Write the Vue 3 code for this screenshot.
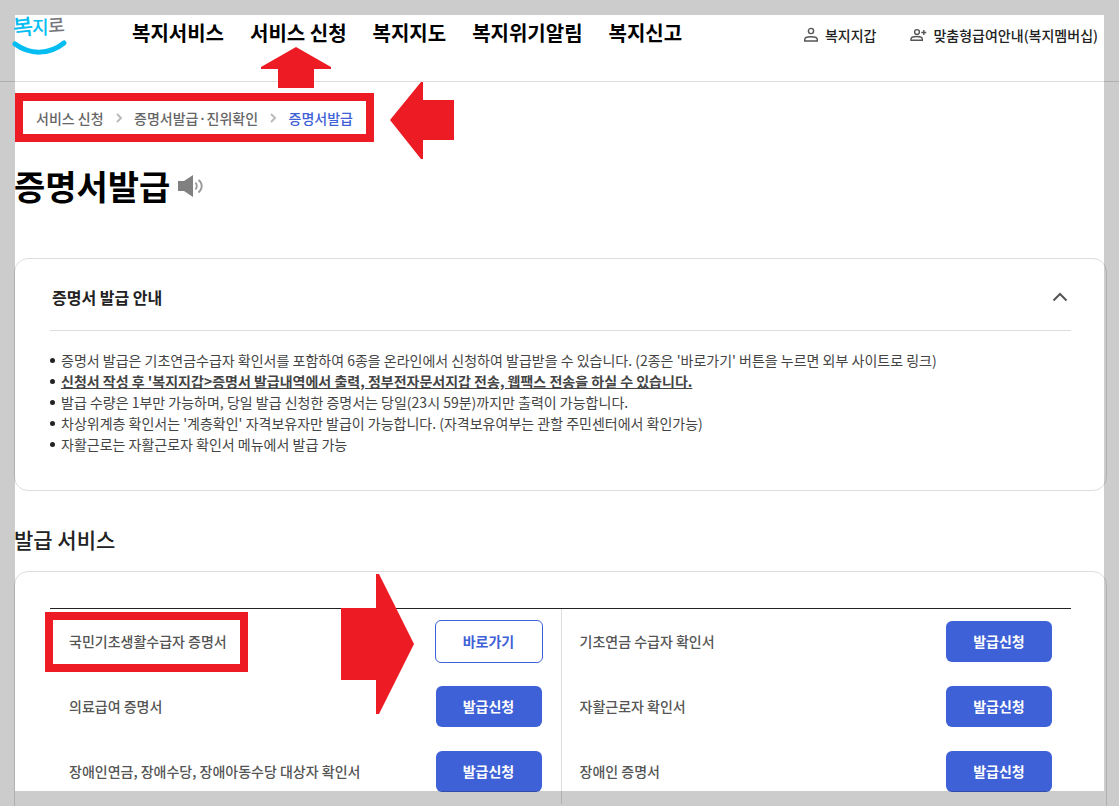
<template>
  <div class="page">
    <header class="header">
      <a class="logo" href="#" aria-label="복지로">
        <svg viewBox="0 0 56 48" width="56" height="48">
          <text class="logo-tall" x="1" y="27" transform="rotate(-6 12 20)">복</text>
          <text class="logo-blue" x="20" y="26">지</text>
          <text class="logo-gray" x="36" y="24" transform="rotate(-4 42 18)">로</text>
          <path d="M3 36C18 47 37 47 52 35" fill="none" stroke="#04bdf2" stroke-width="5" stroke-linecap="round" />
        </svg>
      </a>
      <nav class="menu">
        <a v-for="item in menu" :key="item" href="#" class="menu-link">
          {{ item }}
          <svg v-if="item === '서비스 신청'" class="arrow-up" viewBox="0 0 70 41" width="70" height="41" aria-hidden="true">
            <path d="M35 0L70 20V22H53V41H17V22H0V20Z" />
          </svg>
        </a>
      </nav>
      <div class="utils">
        <a href="#" class="util">
          <svg viewBox="0 0 16 16" width="16" height="16" class="line-icon">
            <circle cx="8" cy="4" r="2.6" />
            <path d="M1.7 14V12.4C1.7 10.6 4.7 9.7 8 9.7S14.3 10.6 14.3 12.4V14Z" />
          </svg>
          복지지갑
        </a>
        <a href="#" class="util">
          <svg viewBox="0 0 17 16" width="17" height="16" class="line-icon">
            <circle cx="7" cy="5" r="2.4" />
            <path d="M1 13.2V12C1 10.3 3.8 9.5 6.7 9.5S12.3 10.3 12.3 12V13.2ZM13.8 3V8M11.3 5.5H16.3" />
          </svg>
          맞춤형급여안내(복지멤버십)
        </a>
      </div>
    </header>

    <main class="content">
      <div class="path-row">
        <nav class="breadcrumb" aria-label="현재 위치">
          <a href="#">서비스 신청</a>
          <svg class="sep" viewBox="0 0 8 12" width="8" height="12"><path d="M2 2L6 6L2 10" /></svg>
          <a href="#">증명서발급·진위확인</a>
          <svg class="sep" viewBox="0 0 8 12" width="8" height="12"><path d="M2 2L6 6L2 10" /></svg>
          <a href="#" class="current">증명서발급</a>
        </nav>
        <svg class="arrow-left" viewBox="0 0 64 77" width="64" height="77" aria-hidden="true">
          <path d="M0 38L31 0H33V18H64V58H33V77H31Z" />
        </svg>
      </div>

      <div class="title-row">
        <h1>증명서발급</h1>
        <button type="button" class="speaker" aria-label="음성 듣기">
          <svg viewBox="0 0 26 24" width="26" height="24">
            <path d="M0 7H6L15 1V23L6 17H0Z" fill="#808080" />
            <path d="M17.5 8.5C19 10.5 19 13.5 17.5 15.5M20.5 6C24.8 9 24.8 15 20.5 18.5" fill="none" stroke="#999" stroke-width="1.8" />
          </svg>
        </button>
      </div>

      <section class="card guide">
        <div class="guide-head">
          <h2>증명서 발급 안내</h2>
          <button type="button" class="toggle" :aria-expanded="open" aria-label="안내 접기" @click="open = !open">
            <svg viewBox="0 0 16 10" width="16" height="10"><path d="M1.5 8.5L8 2L14.5 8.5" /></svg>
          </button>
        </div>
        <ul v-if="open" class="notes">
          <li v-for="note in notes" :key="note.text">
            <strong v-if="note.strong">{{ note.text }}</strong>
            <template v-else>{{ note.text }}</template>
          </li>
        </ul>
      </section>

      <h2 class="section-title">발급 서비스</h2>
      <section class="card services">
        <table>
          <colgroup>
            <col><col class="action-col"><col><col class="action-col">
          </colgroup>
          <tbody>
            <tr v-for="(row, i) in rows" :key="i">
              <template v-for="cell in row" :key="cell.name">
                <th scope="row">
                  <span :class="{ marked: cell.external }">{{ cell.name }}</span>
                </th>
                <td>
                  <svg v-if="cell.external" class="arrow-right" viewBox="0 0 73 140" width="73" height="140" aria-hidden="true">
                    <path d="M0 34H35V0H38L73 70L38 140H35V106H0Z" />
                  </svg>
                  <button type="button" class="btn" :class="{ outline: cell.external }">
                    {{ cell.external ? '바로가기' : '발급신청' }}
                  </button>
                </td>
              </template>
            </tr>
          </tbody>
        </table>
      </section>
    </main>
    <div class="frame"></div>
  </div>
</template>

<script setup>
import { ref } from 'vue'

const open = ref(true)

const menu = ['복지서비스', '서비스 신청', '복지지도', '복지위기알림', '복지신고']

const notes = [
  { text: "증명서 발급은 기초연금수급자 확인서를 포함하여 6종을 온라인에서 신청하여 발급받을 수 있습니다. (2종은 '바로가기' 버튼을 누르면 외부 사이트로 링크)" },
  { text: "신청서 작성 후 '복지지갑>증명서 발급내역에서 출력, 정부전자문서지갑 전송, 웹팩스 전송을 하실 수 있습니다.", strong: true },
  { text: '발급 수량은 1부만 가능하며, 당일 발급 신청한 증명서는 당일(23시 59분)까지만 출력이 가능합니다.' },
  { text: "차상위계층 확인서는 '계층확인' 자격보유자만 발급이 가능합니다. (자격보유여부는 관할 주민센터에서 확인가능)" },
  { text: '자활근로는 자활근로자 확인서 메뉴에서 발급 가능' },
]

const rows = [
  [{ name: '국민기초생활수급자 증명서', external: true }, { name: '기초연금 수급자 확인서' }],
  [{ name: '의료급여 증명서' }, { name: '자활근로자 확인서' }],
  [{ name: '장애인연금, 장애수당, 장애아동수당 대상자 확인서' }, { name: '장애인 증명서' }],
]
</script>

<style>
body {
  margin: 0;
}
</style>

<style scoped>
.page {
  position: relative;
  height: 100vh;
  overflow: hidden;
  background: #fff;
  color: #222;
  font-family: "Noto Sans CJK KR", sans-serif;
  font-size: 14px;
}

.page * {
  box-sizing: border-box;
}

a {
  color: inherit;
  text-decoration: none;
}

h1,
h2 {
  margin: 0;
}

button {
  padding: 0;
  border: 0;
  background: none;
  font-family: inherit;
  cursor: pointer;
}

svg {
  display: block;
}

.frame {
  position: absolute;
  inset: 0;
  border: 15px solid rgba(0, 0, 0, .2);
  pointer-events: none;
}

.header {
  display: flex;
  align-items: flex-start;
  height: 82px;
  padding: 8px 21px 0 12px;
  border-bottom: 1px solid #ddd;
}

.logo {
  position: relative;
  z-index: 2;
}

.logo svg {
  overflow: visible;
}

.logo text {
  font-family: "Noto Sans CJK KR", sans-serif;
  font-weight: 500;
}

.logo-tall { fill: #04bdf2; font-size: 22px; }
.logo-blue { fill: #04bdf2; font-size: 18px; }
.logo-gray { fill: #77777b; font-size: 18px; }

.menu {
  display: flex;
  gap: 26px;
  margin-left: 64px;
  padding-top: 10px;
}

.menu-link {
  position: relative;
  color: #000;
  font-size: 20px;
  font-weight: 700;
  line-height: 30px;
  white-space: nowrap;
}

.arrow-up,
.arrow-left,
.arrow-right {
  fill: #ed1c24;
}

.arrow-up {
  position: absolute;
  top: 29px;
  left: 11px;
}

.utils {
  display: flex;
  gap: 34px;
  margin-left: auto;
  padding-top: 17px;
}

.util {
  display: flex;
  align-items: center;
  gap: 6px;
  font-weight: 500;
  line-height: 20px;
  white-space: nowrap;
}

.line-icon {
  fill: none;
  stroke: #555;
  stroke-width: 1.4;
}

.content {
  padding: 0 12px 0 14px;
}

.path-row {
  display: flex;
  align-items: flex-start;
  gap: 16px;
  height: 77px;
}

.breadcrumb {
  display: flex;
  align-items: center;
  justify-content: space-between;
  width: 359px;
  height: 49px;
  margin: 11px 0 0 1px;
  padding: 0 13px;
  border: 8px solid #ed1c24;
  color: #666;
  font-weight: 500;
  white-space: nowrap;
}

.breadcrumb .current {
  color: #3e61d7;
}

.sep {
  fill: none;
  stroke: #bbb;
  stroke-width: 2;
}

.title-row {
  display: flex;
  align-items: center;
  gap: 8px;
  height: 54px;
}

h1 {
  color: #000;
  font-size: 34px;
  font-weight: 700;
  line-height: 50px;
}

.card {
  border: 1px solid #ddd;
  border-radius: 14px;
}

.guide {
  min-height: 233px;
  margin-top: 45px;
  padding: 0 35px;
}

.guide-head {
  display: flex;
  align-items: center;
  justify-content: space-between;
  height: 72px;
  padding: 4px 3px 0 2px;
  border-bottom: 1px solid #ddd;
}

.guide-head h2 {
  font-size: 16px;
  font-weight: 700;
}

.toggle path {
  fill: none;
  stroke: #555;
  stroke-width: 2;
}

.notes {
  margin: 19px 0 0;
  padding: 0;
  list-style: none;
  color: #444;
}

.notes li {
  display: flex;
  align-items: center;
  gap: 6px;
  line-height: 21px;
  white-space: nowrap;
}

.notes li::before {
  content: "";
  width: 5px;
  height: 5px;
  border-radius: 50%;
  background: #222;
}

.notes strong {
  font-weight: 700;
  text-decoration: underline;
}

.section-title {
  margin: 33px 0 16px;
  font-size: 21px;
  font-weight: 500;
  line-height: 31px;
}

.services {
  padding: 36px 35px;
}

table {
  width: 100%;
  border-collapse: separate;
  border-spacing: 0;
  border-top: 1px solid #222;
  table-layout: fixed;
}

.action-col {
  width: 144px;
}

th,
td {
  height: 65px;
  padding: 0 19px;
}

th {
  padding-bottom: 2px;
  color: #555;
  font-weight: 500;
  text-align: left;
  white-space: nowrap;
}

th:nth-child(3) {
  padding-left: 18px;
  border-left: 1px solid #ddd;
}

td {
  position: relative;
}

.marked {
  position: relative;
}

.marked::after {
  content: "";
  position: absolute;
  inset: -19px -21px -21px -24px;
  border: 8px solid #ed1c24;
}

.arrow-right {
  position: absolute;
  top: -35px;
  right: 147px;
}

.btn {
  display: block;
  width: 106px;
  height: 41px;
  padding-bottom: 2px;
  border-radius: 6px;
  background: #3e61d7;
  color: #fff;
  font-size: 14px;
  font-weight: 700;
}

.btn.outline {
  width: 108px;
  height: 43px;
  margin: 0 -1px;
  border: 1px solid #3e61d7;
  background: #fff;
  color: #3e61d7;
}
</style>
